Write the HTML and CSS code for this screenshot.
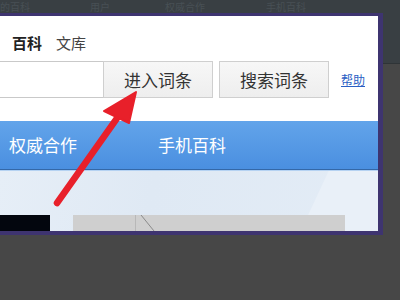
FILE: index.html
```html
<!DOCTYPE html>
<html lang="zh-CN">
<head>
<meta charset="utf-8">
<link rel="stylesheet" href="styles.css">
</head>
<body>
<div class="topstrip">
  <span class="ghost g1">的百科</span>
  <span class="ghost g2">用户</span>
  <span class="ghost g3">权威合作</span>
  <span class="ghost g4">手机百科</span>
</div>
<div class="window">
  <div class="tabs">
    <span class="tab active">百科</span>
    <span class="tab">文库</span>
  </div>
  <div class="search">
    <div class="input"></div>
    <button class="btn btn1">进入词条</button>
    <button class="btn btn2">搜索词条</button>
    <a class="help" href="#">帮助</a>
  </div>
  <div class="nav">
    <span class="navitem n1">权威合作</span>
    <span class="navitem n2">手机百科</span>
  </div>
  <div class="banner">
    <div class="shape"></div>
    <div class="blocks">
      <div class="black"></div>
      <div class="gray">
        <div class="vline"></div>
        <svg class="diag" width="20" height="16" viewBox="0 0 20 16"><line x1="6" y1="0" x2="19" y2="16" stroke="#8a8a8a" stroke-width="1"/></svg>
      </div>
    </div>
  </div>
</div>
<svg class="arrow" width="400" height="300" viewBox="0 0 400 300">
  <line x1="57" y1="203" x2="120" y2="114" stroke="#e8202a" stroke-width="6.5" stroke-linecap="round"/>
  <polygon points="136,92 104,111 129,123" fill="#e8202a" stroke="#e8202a" stroke-width="2" stroke-linejoin="round"/>
</svg>
</body>
</html>
```
FILE: styles.css
```css
html, body {
  margin: 0;
  padding: 0;
}
body {
  width: 400px;
  height: 300px;
  overflow: hidden;
  position: relative;
  background: linear-gradient(to bottom, #393f43 0, #393f43 63px, #2f3437 63px, #2f3437 64px, #474747 64px);
  font-family: "Noto Sans CJK SC", "Noto Sans", sans-serif;
}
.topstrip {
  height: 13px;
  position: relative;
  overflow: hidden;
}
.ghost {
  position: absolute;
  top: 1px;
  font-size: 10px;
  line-height: 11px;
  color: #485055;
}
.g1 { left: 0; }
.g2 { left: 90px; }
.g3 { left: 165px; }
.g4 { left: 266px; }
.window {
  width: 378px;
  border-top: 3px solid #3e3470;
  border-right: 5px solid #3e3470;
  border-bottom: 4px solid #3e3470;
  background: #fff;
  box-sizing: content-box;
}
.tabs {
  height: 45px;
  display: flex;
  align-items: flex-start;
  padding-top: 19px;
  box-sizing: border-box;
  padding-left: 12px;
  gap: 14px;
}
.tab {
  font-size: 15px;
  line-height: 16px;
  color: #444;
}
.tab.active {
  font-weight: bold;
  color: #222;
}
.search {
  height: 37px;
  display: flex;
  align-items: stretch;
}
.input {
  width: 103px;
  border-top: 1px solid #c9c9c9;
  border-bottom: 1px solid #c9c9c9;
  background: #fff;
}
.btn {
  margin: 0;
  padding: 0;
  border: 1px solid #cfcfcf;
  background: linear-gradient(to bottom, #f7f7f7, #eeeeee);
  font-family: "Noto Sans CJK SC", sans-serif;
  font-size: 17px;
  color: #333;
  letter-spacing: 0;
}
.btn1 {
  width: 110px;
}
.btn2 {
  width: 110px;
  margin-left: 6px;
}
.help {
  margin-left: 12px;
  align-self: center;
  font-size: 12px;
  color: #2a5fc4;
  text-decoration: underline;
}
.nav {
  margin-top: 23px;
  height: 49px;
  background: linear-gradient(to bottom, #62a4ea, #4a8fe0);
  border-bottom: 1px solid #3468a8;
  display: flex;
  align-items: center;
  box-sizing: border-box;
}
.navitem {
  color: #fff;
  font-size: 17px;
  line-height: 20px;
}
.n1 { margin-left: 9px; }
.n2 { margin-left: 81px; }
.banner {
  height: 61px;
  position: relative;
  overflow: hidden;
  border-top: 1px solid #b5d2f2;
  box-sizing: border-box;
  background: linear-gradient(100deg, #e6eef7 0%, #dfe9f4 40%, #e3ecf6 100%);
  display: flex;
  align-items: flex-end;
}
.shape {
  position: absolute;
  left: 310px;
  top: -10px;
  width: 120px;
  height: 100px;
  background: #e9f0f8;
  transform: skewX(-25deg);
}
.blocks {
  position: relative;
  display: flex;
  height: 16px;
  width: 100%;
}
.black {
  width: 50px;
  background: #03060e;
}
.gray {
  margin-left: 23px;
  width: 272px;
  background: #cfcfcf;
  position: relative;
  display: flex;
}
.vline {
  margin-left: 62px;
  width: 1px;
  background: #b8b8b8;
}
.diag {
  position: absolute;
  left: 62px;
  top: 0;
}
.arrow {
  position: absolute;
  left: 0;
  top: 0;
  pointer-events: none;
}
```
